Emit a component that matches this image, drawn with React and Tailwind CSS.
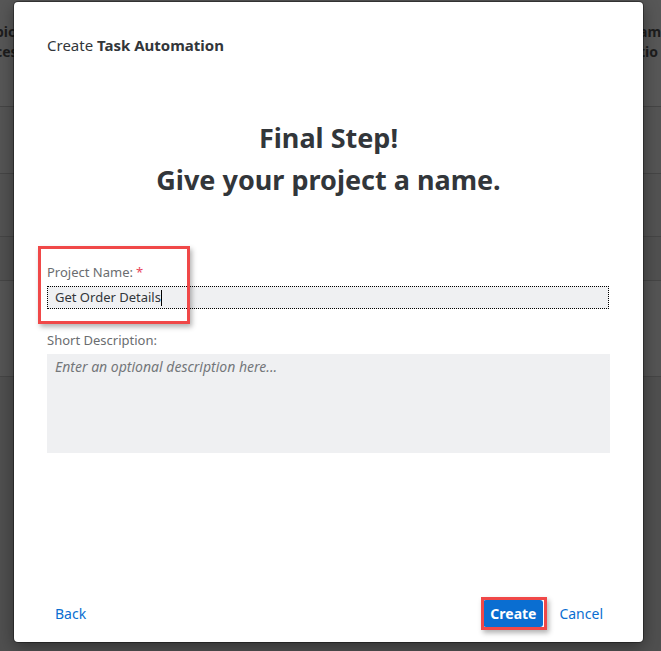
export default function App() {
  const font = { fontFamily: '"Noto Sans", "Open Sans", Arial, sans-serif' };
  return (
    <div className="relative w-[661px] h-[651px] overflow-hidden bg-[#4f4f4f]" style={font}>
      {/* background page rows */}
      <div className="flex flex-col w-full h-full">
        <div className="h-[107px] bg-[#575757] border-b border-[#454545] flex justify-between items-start pt-[22px] text-[14px] font-bold text-[#1d1d1d] leading-[20px]">
          <div className="-ml-[5px]">
            <div>pic</div>
            <div>ces</div>
          </div>
          <div className="-mr-[4px] text-left w-[26px] overflow-hidden">
            <div>amp</div>
            <div>tio</div>
          </div>
        </div>
        <div className="h-[67px] bg-[#545454] border-b border-[#454545]" />
        <div className="h-[63px] bg-[#525252] border-b border-[#454545]" />
        <div className="h-[44px] bg-[#505050] border-b border-[#454545]" />
        <div className="h-[96px] bg-[#545454] border-b border-[#454545]" />
        <div className="flex-1 bg-[#4f4f4f]" />
      </div>

      {/* dialog */}
      <div className="absolute left-[14px] top-[2px] w-[629px] h-[640px] bg-white rounded-[4px] shadow-[0_0_0_1px_rgba(0,0,0,0.35),0_4px_16px_rgba(0,0,0,0.4)] flex flex-col">
        <div className="px-[33px] pt-[33px] text-[15px] leading-[20px] text-[#32363a]">
          Create <span className="font-bold">Task Automation</span>
        </div>

        <div className="mt-[62px] text-center text-[27px] leading-[42px] font-bold text-[#32363a]">
          <div>Final Step!</div>
          <div>Give your project a name.</div>
        </div>

        <div className="px-[33px] mt-[62px] flex flex-col">
          <div className="text-[13px] leading-[18px] text-[#6a6d70]">
            Project Name:<span className="text-[#e9445a] ml-[3px]">*</span>
          </div>
          <div className="mt-[5px] h-[23px] w-[562px] bg-[#eff0f2] border border-dotted border-black flex items-center px-[7px] text-[13px] text-[#32363a]">
            <span>Get Order Details</span>
            <span className="inline-block w-[1px] h-[16px] bg-black" />
          </div>

          <div className="mt-[22px] text-[13px] leading-[18px] text-[#6a6d70]">Short Description:</div>
          <div className="mt-[5px] h-[99px] w-full bg-[#eff0f2] px-[8px] pt-[4px] text-[14px] leading-[18px] italic text-[#74777a]">
            Enter an optional description here...
          </div>
        </div>

        <div className="mt-auto px-[41px] pb-[15px] flex items-center justify-between">
          <div className="text-[14px] text-[#0a6ed1]">Back</div>
          <div className="flex items-center gap-[16px]">
            <div className="w-[60px] h-[27px] rounded-[3px] bg-[#0a6ed1] text-white font-bold text-[14px] flex items-center justify-center">
              Create
            </div>
            <div className="text-[14px] text-[#0a6ed1] mr-[-1px]">Cancel</div>
          </div>
        </div>
      </div>

      {/* annotation boxes */}
      <div className="absolute left-[38px] top-[246px] w-[152px] h-[78px] border-[3px] border-[#f04848] shadow-[2px_3px_5px_rgba(0,0,0,0.3)]" />
      <div className="absolute left-[481px] top-[597px] w-[66px] h-[33px] border-[3px] border-[#f04848] shadow-[2px_3px_5px_rgba(0,0,0,0.3)]" />
    </div>
  );
}
